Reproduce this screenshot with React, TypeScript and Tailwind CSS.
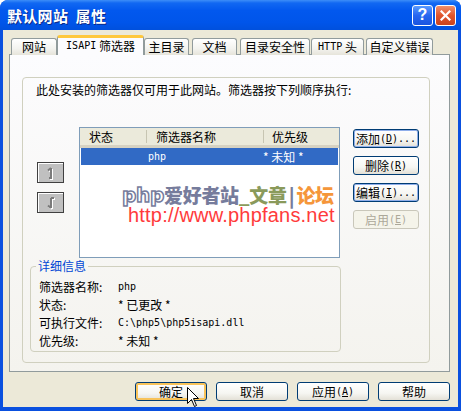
import React from "react";

function UpArrow() {
  return (
    <svg width="10" height="14" viewBox="0 0 10 14" className="block">
      <g stroke="#ffffff" strokeWidth="2" fill="none" transform="translate(1,1)">
        <path d="M5 2 L5 12" />
        <path d="M2 4.5 L5 2" />
        <path d="M3 12 L6 12" />
      </g>
      <g stroke="#7b7b7b" strokeWidth="2" fill="none">
        <path d="M5 2 L5 12" />
        <path d="M2 4.5 L5 2" />
        <path d="M3 12 L6 12" />
      </g>
    </svg>
  );
}

function DownArrow() {
  return (
    <svg width="10" height="14" viewBox="0 0 10 14" className="block">
      <g stroke="#ffffff" strokeWidth="2" fill="none" transform="translate(1,1)">
        <path d="M5 2 L5 12" />
        <path d="M2 9.5 L5 12" />
        <path d="M5 2 L8 2" />
      </g>
      <g stroke="#7b7b7b" strokeWidth="2" fill="none">
        <path d="M5 2 L5 12" />
        <path d="M2 9.5 L5 12" />
        <path d="M5 2 L8 2" />
      </g>
    </svg>
  );
}

const btnBase =
  "shrink-0 whitespace-nowrap flex items-center justify-center rounded-[3px] border border-[#003C74] bg-[linear-gradient(180deg,#FFFFFF_0%,#F6F6F2_60%,#E3E0D6_100%)] text-[12px] leading-[14px] text-black";

function Mn({ t, u, rest }: { t: string; u: string; rest?: string }) {
  return (
    <>
      {t}
      <span className="font-['DejaVu_Sans_Mono',monospace] text-[10px]">
        (<span className="underline">{u}</span>){rest || ""}
      </span>
    </>
  );
}

export default function App() {
  return (
    <div className="relative w-[461px] h-[411px] overflow-hidden rounded-t-[8px] bg-[#0A50DF] font-['Noto_Sans_CJK_SC','Liberation_Sans',sans-serif] flex flex-col select-none">
      {/* title bar */}
      <div className="h-[30px] shrink-0 flex items-center pl-[7px] pr-[5px] bg-[linear-gradient(180deg,#3D8EF8_0%,#1168F2_10%,#0258EE_35%,#0055EA_75%,#0050DD_100%)]">
        <div className="flex-1 text-white font-bold text-[15px] leading-[17px] tracking-[0.3px] [text-shadow:1px_1px_0_#0A2A8A]">
          默认网站&nbsp;&nbsp;属性
        </div>
        <div className="flex gap-[2px] items-center">
          <div className="w-[21px] h-[21px] rounded-[3px] border border-white bg-[linear-gradient(180deg,#5A9BFF_0%,#2766F0_50%,#1A55E0_100%)] flex items-center justify-center text-white font-bold text-[16px] leading-none font-['Liberation_Sans',sans-serif]">
            ?
          </div>
          <div className="w-[21px] h-[21px] rounded-[3px] border border-white bg-[linear-gradient(180deg,#F0906C_0%,#E0552D_50%,#C8431E_100%)] flex items-center justify-center">
            <svg width="11" height="11" viewBox="0 0 11 11">
              <path d="M1.5 1.5 L9.5 9.5 M9.5 1.5 L1.5 9.5" stroke="#ffffff" strokeWidth="2.2" strokeLinecap="square" />
            </svg>
          </div>
        </div>
      </div>

      {/* body */}
      <div className="h-[377px] mx-[3px] bg-[#ECE9D8] flex flex-col pt-[5px] text-[12px] leading-[14px] text-black">
        {/* tabs */}
        <div className="relative z-10 h-[20px] -mb-[1px] flex items-end pl-[8px]">
          <div className="shrink-0 w-[46px] h-[17px] rounded-t-[3px] border border-b-0 border-[#919B9C] bg-[linear-gradient(180deg,#FFFFFF_0%,#F3F3EF_60%,#E6E4DA_100%)] flex items-center justify-center">网站</div>
          <div className="shrink-0 w-[87px] h-[20px] rounded-t-[3px] border-x border-[#919B9C] border-t-[3px] border-t-[#FFC83C] bg-[#FCFCFE] flex items-center justify-center pb-[1px] whitespace-nowrap">
            <span className="font-['DejaVu_Sans_Mono',monospace] text-[10px]">ISAPI</span>&nbsp;筛选器
          </div>
          <div className="shrink-0 w-[45px] h-[17px] rounded-t-[3px] border border-b-0 border-[#919B9C] bg-[linear-gradient(180deg,#FFFFFF_0%,#F3F3EF_60%,#E6E4DA_100%)] flex items-center justify-center">主目录</div>
          <div className="shrink-0 ml-[3px] w-[45px] h-[17px] rounded-t-[3px] border border-b-0 border-[#919B9C] bg-[linear-gradient(180deg,#FFFFFF_0%,#F3F3EF_60%,#E6E4DA_100%)] flex items-center justify-center">文档</div>
          <div className="shrink-0 ml-[3px] w-[70px] h-[17px] rounded-t-[3px] border border-b-0 border-[#919B9C] bg-[linear-gradient(180deg,#FFFFFF_0%,#F3F3EF_60%,#E6E4DA_100%)] flex items-center justify-center">目录安全性</div>
          <div className="shrink-0 ml-[1px] w-[53px] h-[17px] rounded-t-[3px] border border-b-0 border-[#919B9C] bg-[linear-gradient(180deg,#FFFFFF_0%,#F3F3EF_60%,#E6E4DA_100%)] flex items-center justify-center whitespace-nowrap">
            <span className="font-['DejaVu_Sans_Mono',monospace] text-[10px]">HTTP</span>&nbsp;头
          </div>
          <div className="shrink-0 ml-[2px] w-[67px] h-[17px] rounded-t-[3px] border border-b-0 border-[#919B9C] bg-[linear-gradient(180deg,#FFFFFF_0%,#F3F3EF_60%,#E6E4DA_100%)] flex items-center justify-center">自定义错误</div>
        </div>

        {/* panel */}
        <div className="ml-[6px] w-[441px] h-[318px] border border-[#919B9C] bg-[linear-gradient(180deg,#FCFCFE_0%,#F4F3EE_100%)] pt-[22px] pl-[12px]">
          <div className="w-[408px] h-[286px] rounded-[4px] border border-[#D0D0BF] flex flex-col">
            <div className="ml-[13px] mt-[5px] h-[14px] whitespace-nowrap">此处安装的筛选器仅可用于此网站。筛选器按下列顺序执行:</div>

            <div className="mt-[30px] grid grid-cols-[14px_27px_15px_261px_13px_66px] items-start">
              <div />
              {/* arrows */}
              <div className="mt-[35px] flex flex-col gap-[9px]">
                <div className="w-[27px] h-[21px] border border-[#404040] bg-[#C0C0C0] flex items-center justify-center shadow-[inset_1px_1px_0_#FFFFFF]">
                  <UpArrow />
                </div>
                <div className="w-[27px] h-[21px] border border-[#404040] bg-[#C0C0C0] flex items-center justify-center shadow-[inset_1px_1px_0_#FFFFFF]">
                  <DownArrow />
                </div>
              </div>
              <div />

              {/* list */}
              <div className="w-[261px] h-[131px] border border-[#7F9DB9] bg-white flex flex-col">
                <div className="h-[20px] flex items-center bg-[#EBEADB] border-b-[3px] border-b-[#D6D2C2]">
                  <div className="w-[66px] pl-[9px]">状态</div>
                  <div className="w-[1px] h-[13px] bg-[#C7C5B2]" />
                  <div className="w-[116px] pl-[9px]">筛选器名称</div>
                  <div className="w-[1px] h-[13px] bg-[#C7C5B2]" />
                  <div className="pl-[8px]">优先级</div>
                </div>
                <div className="mx-[1px] h-[17px] bg-[#316AC5] text-white flex items-center pl-[67px]">
                  <span className="w-[115px] font-['DejaVu_Sans_Mono',monospace] text-[10px]">php</span>
                  <span>* 未知 *</span>
                </div>
              </div>
              <div />

              {/* side buttons */}
              <div className="mt-[2px] flex flex-col gap-[8px]">
                <div className={btnBase + " w-[66px] h-[19px] shadow-[inset_0_0_0_1px_#8FAEEA]"}>
                  <Mn t="添加" u="D" rest="..." />
                </div>
                <div className={btnBase + " w-[66px] h-[19px]"}>
                  <Mn t="删除" u="R" />
                </div>
                <div className={btnBase + " w-[66px] h-[19px] shadow-[inset_0_0_0_1px_#8FAEEA]"}>
                  <Mn t="编辑" u="I" rest="..." />
                </div>
                <div className="shrink-0 whitespace-nowrap w-[66px] h-[19px] flex items-center justify-center rounded-[3px] border border-[#C9C7BA] bg-[#F5F4EA] text-[#ACA899]">
                  <Mn t="启用" u="E" />
                </div>
              </div>
            </div>

            {/* details */}
            <div className="relative mt-[8px] ml-[7px] w-[311px] h-[86px] rounded-[4px] border border-[#D0D0BF] pl-[8px] pt-[11px]">
              <div className="absolute -top-[8px] left-[5px] px-[2px] bg-[#F7F6F2] text-[#0046D5]">详细信息</div>
              <div className="flex h-[18px] items-center">
                <span className="w-[79px]">筛选器名称:</span>
                <span className="font-['DejaVu_Sans_Mono',monospace] text-[10px]">php</span>
              </div>
              <div className="flex h-[18px] items-center">
                <span className="w-[79px]">状态:</span>
                <span>* 已更改 *</span>
              </div>
              <div className="flex h-[18px] items-center">
                <span className="w-[79px]">可执行文件:</span>
                <span className="font-['DejaVu_Sans_Mono',monospace] text-[10px]">C:\php5\php5isapi.dll</span>
              </div>
              <div className="flex h-[17px] items-center">
                <span className="w-[79px]">优先级:</span>
                <span>* 未知 *</span>
              </div>
            </div>
          </div>
        </div>

        {/* bottom buttons */}
        <div className="mt-[10px] flex justify-end gap-[9px] pr-[8px]">
          <div className={btnBase + " w-[72px] h-[19px] shadow-[inset_0_0_0_2px_#F8C35A]"}>确定</div>
          <div className={btnBase + " w-[72px] h-[19px]"}>取消</div>
          <div className={btnBase + " w-[72px] h-[19px]"}>
            <Mn t="应用" u="A" />
          </div>
          <div className={btnBase + " w-[72px] h-[19px]"}>帮助</div>
        </div>
      </div>

      {/* watermark overlay */}
      <div className="absolute left-[122px] top-[186px] flex flex-col gap-[2px] pointer-events-none whitespace-nowrap">
        <div className="h-[18px] flex items-center font-black text-[19px] leading-[18px] tracking-[-0.3px]">
          <span className="text-white [-webkit-text-stroke:1.5px_#767C9C] font-['DejaVu_Sans',sans-serif] text-[20px]">php</span>
          <span className="text-[#767C9C]">爱好者站</span>
          <span className="text-[#8A9A5B]">_文章</span>
          <span className="text-[#767C9C] mx-[2px]">|</span>
          <span className="text-[#F5963A]">论坛</span>
        </div>
        <div className="ml-[6px] h-[18px] text-[20px] leading-[18px] tracking-[0.2px] text-[#FF3B3B] font-['Liberation_Sans',sans-serif]">
          http://www.phpfans.net
        </div>
      </div>

      {/* mouse cursor overlay */}
      <svg className="absolute left-[187px] top-[387px]" width="13" height="21" viewBox="0 0 13 21">
        <path d="M0.5 0.5 L0.5 16.5 L4.5 12.5 L7.5 19.5 L9.5 18.5 L6.5 11.5 L11.5 11.5 Z" fill="#ffffff" stroke="#000000" strokeWidth="1" />
      </svg>
    </div>
  );
}
